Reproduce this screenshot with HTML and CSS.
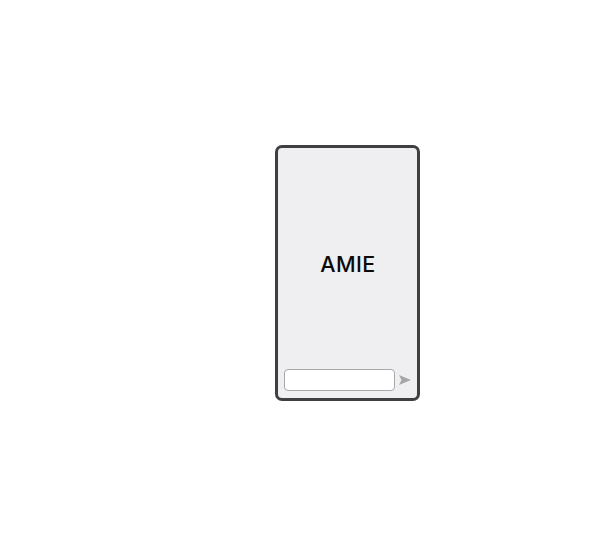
FILE: index.html
```html
<!DOCTYPE html>
<html>
<head>
<meta charset="utf-8">
<link rel="stylesheet" href="styles.css">
</head>
<body>
<div class="stage">
  <div class="phone">
    <div class="screen">
      <div class="title">AMIE</div>
    </div>
    <div class="composer">
      <div class="input"></div>
      <svg class="send" width="12" height="10" viewBox="0 0 12 10"><path d="M0 0 L12 5 L0 10 L2.5 5 Z" fill="#a6a6a8"/></svg>
    </div>
  </div>
</div>
</body>
</html>
```
FILE: styles.css
```css
html, body { margin: 0; padding: 0; background: #ffffff; }
.stage {
  width: 600px;
  height: 550px;
  padding: 145px 0 0 275px;
  box-sizing: border-box;
}
.phone {
  width: 145px;
  height: 256px;
  box-sizing: border-box;
  border: 3px solid #3f3f41;
  border-radius: 7px;
  background: #efeef1;
  display: flex;
  flex-direction: column;
}
.screen {
  flex: 1;
  display: flex;
  align-items: center;
  justify-content: center;
  padding-top: 10px;
}
.title {
  font-family: Inter, sans-serif;
  font-weight: 500;
  font-size: 21.5px;
  color: #0a0a0a;
  letter-spacing: 0.4px;
  padding-left: 1px;
}
.composer {
  display: flex;
  align-items: center;
  padding: 0 0 7px 6px;
  gap: 4px;
}
.input {
  width: 111px;
  height: 22px;
  box-sizing: border-box;
  background: #fff;
  border: 1px solid #a9a9ab;
  border-radius: 4px;
}
.send { display: block; }
```
